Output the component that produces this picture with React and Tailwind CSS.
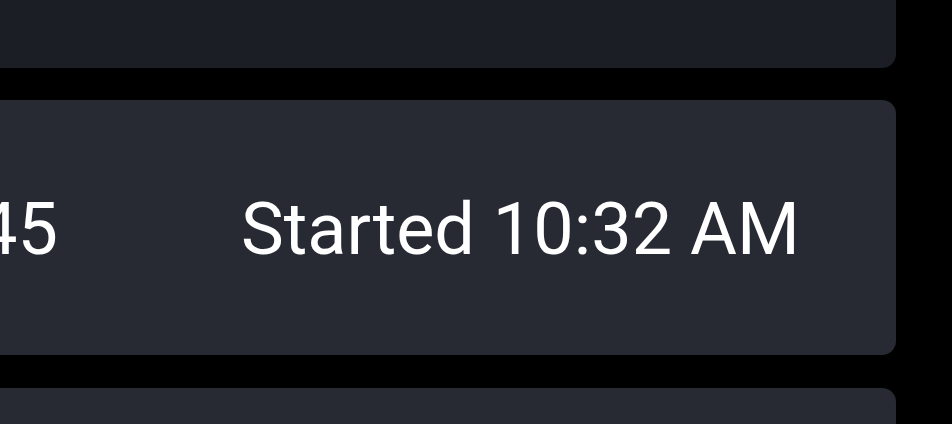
import React from 'react';

const Row = ({ time, started }) => (
    <div className="-ml-[300px] h-[255px] shrink-0 rounded-[14px] bg-[#282a33] flex items-center pt-[4px] text-white">
        <span className="w-[358px] text-right">{time}</span>
        <span className="ml-[183px]">{started}</span>
    </div>
);

const App = () => {
    return (
        <div
            className="w-[952px] h-[424px] overflow-hidden bg-black pr-[56px] flex flex-col gap-[32px] text-[72px] leading-none"
            style={{ fontFamily: 'Roboto, "Noto Sans", sans-serif' }}
        >
            {/* previous session, mostly scrolled off */}
            <div className="-ml-[300px] -mt-[187px] h-[255px] shrink-0 rounded-[14px] bg-[#1c1e26]" />

            <Row time="01:12:45" started="Started 10:32 AM" />

            <div className="-ml-[300px] mt-[1px] h-[255px] shrink-0 rounded-[14px] bg-[#282a33]" />
        </div>
    );
};

export default App;
